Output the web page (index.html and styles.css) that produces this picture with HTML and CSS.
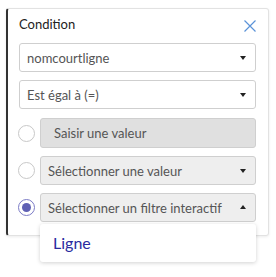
FILE: index.html
```html
<!DOCTYPE html>
<html lang="fr">

<head>
    <meta charset="UTF-8">
    <meta name="viewport" content="width=device-width, initial-scale=1.0">
    <title>condition</title>
    <link rel="stylesheet" href="styles.css">
</head>

<body>

    <!-- condition panel -->
    <div class="card">
        <div class="card-head">
            <h1 class="title">Condition</h1>
            <svg class="close" width="12" height="12" viewBox="0 0 12 12">
                <path d="M0.5 0.5 L11.5 11.5 M11.5 0.5 L0.5 11.5" stroke="#5b93d8" stroke-width="1.2" fill="none" />
            </svg>
        </div>

        <div class="select">
            <span>nomcourtligne</span>
            <i class="caret"></i>
        </div>

        <div class="select">
            <span>Est égal à (=)</span>
            <i class="caret"></i>
        </div>

        <!-- value choices -->
        <div class="choice">
            <span class="radio"></span>
            <div class="field">Saisir une valeur</div>
        </div>

        <div class="choice">
            <span class="radio"></span>
            <div class="select grey">
                <span>Sélectionner une valeur</span>
                <i class="caret"></i>
            </div>
        </div>

        <div class="choice">
            <span class="radio checked"></span>
            <div class="select grey open">
                <span>Sélectionner un filtre interactif</span>
                <i class="caret up"></i>
                <div class="menu">
                    <div class="menu-item">Ligne</div>
                </div>
            </div>
        </div>
    </div>

</body>

</html>
```

FILE: styles.css
```css
* {
    margin: 0;
    padding: 0;
    box-sizing: border-box;
}

html,
body {
    width: 100%;
    height: 100%;
}

body {
    background-color: white;
    font-family: Lato, "Liberation Sans", sans-serif;
    font-size: 13px;
    color: #555;
    padding-top: 8px;
}

.card {
    margin-left: 6px;
    width: 263px;
    height: 228px;
    border: 1px solid #e2e2e2;
    border-left: 2px solid #333;
    border-radius: 3px;
    box-shadow: 0 1px 3px rgba(0, 0, 0, 0.08);
    padding: 7px 12px 0 11px;
}

.card .card-head {
    display: flex;
    justify-content: space-between;
    align-items: center;
    height: 16px;
    margin-bottom: 11px;
}

.card .card-head .title {
    font-size: 13px;
    font-weight: normal;
    color: #222;
    line-height: 16px;
}

.card .card-head .close {
    margin-top: 3px;
}

.select {
    position: relative;
    display: flex;
    align-items: center;
    justify-content: space-between;
    height: 29px;
    border: 1px solid #cfcfcf;
    border-radius: 3px;
    background-color: white;
    padding: 0 9px 0 7px;
    margin-bottom: 8px;
}

.select.grey {
    background-color: #eeeeee;
    margin-bottom: 0;
}

.caret {
    width: 0;
    height: 0;
    border-left: 3px solid transparent;
    border-right: 3px solid transparent;
    border-top: 4px solid #222;
    margin-top: 1px;
}

.caret.up {
    border-top: none;
    border-bottom: 4px solid #222;
    margin-top: -1px;
}

.choice {
    display: flex;
    align-items: center;
    gap: 5px;
    margin-top: 9px;
}

.choice + .choice {
    margin-top: 8px;
}

.choice .select,
.choice .field {
    flex: 1;
}

.radio {
    width: 17px;
    height: 17px;
    margin-left: -1px;
    border: 1px solid #c8c8c8;
    border-radius: 50%;
    background-color: white;
    display: flex;
    align-items: center;
    justify-content: center;
}

.radio.checked {
    border-color: #7b7bc6;
}

.radio.checked::after {
    content: "";
    width: 9px;
    height: 9px;
    border-radius: 50%;
    background-color: #5f60b4;
}

.field {
    height: 30px;
    line-height: 28px;
    border: 1px solid #cfcfcf;
    border-radius: 3px;
    background-color: #e0e0e0;
    padding-left: 13px;
}

/* dropdown list under the open select */
.menu {
    position: absolute;
    top: 30px;
    left: -1px;
    right: -1px;
    height: 38px;
    z-index: 2;
    background-color: white;
    border-radius: 3px;
    box-shadow: 0 1px 4px rgba(0, 0, 0, 0.18);
    padding-left: 13px;
}

.menu .menu-item {
    font-size: 16px;
    line-height: 38px;
    color: #2a2aa0;
}
```
